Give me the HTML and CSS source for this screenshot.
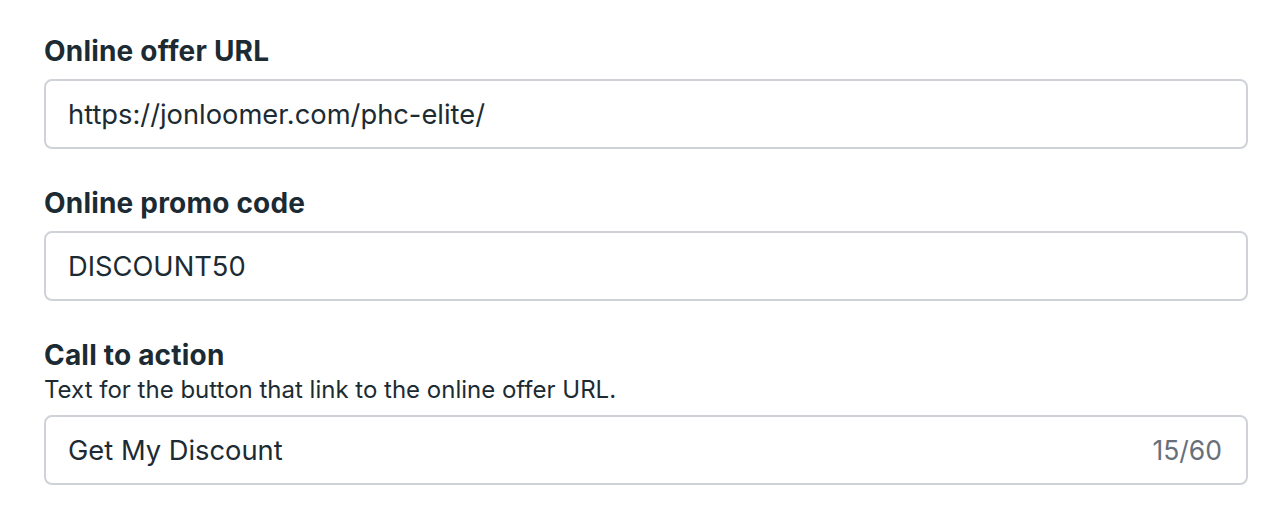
FILE: index.html
```html
<!DOCTYPE html>
<html>
<head>
<meta charset="utf-8">
<link rel="stylesheet" href="styles.css">
</head>
<body>
<div class="form">
  <div class="field">
    <div class="label">Online offer URL</div>
    <div class="input"><span class="value">https://jonloomer.com/phc-elite/</span></div>
  </div>
  <div class="field">
    <div class="label">Online promo code</div>
    <div class="input"><span class="value">DISCOUNT50</span></div>
  </div>
  <div class="field">
    <div class="label">Call to action</div>
    <div class="desc">Text for the button that link to the online offer URL.</div>
    <div class="input"><span class="value">Get My Discount</span><span class="count">15/60</span></div>
  </div>
</div>
</body>
</html>
```
FILE: styles.css
```css
html, body {
  margin: 0;
  padding: 0;
  background: #ffffff;
}
body {
  font-family: Inter, "Liberation Sans", Arial, sans-serif;
  color: #1c2b33;
}
.form {
  padding: 35px 36px 0 44px;
  display: flex;
  flex-direction: column;
  gap: 38px;
}
.field {
  display: flex;
  flex-direction: column;
}
.label {
  font-size: 28px;
  line-height: 32px;
  font-weight: 700;
  letter-spacing: 0.2px;
  margin-bottom: 12px;
}
.desc {
  font-size: 24px;
  line-height: 30px;
  margin-top: -8px;
  margin-bottom: 10px;
}
.input {
  box-sizing: border-box;
  height: 70px;
  border: 2px solid #cfd3d8;
  border-radius: 8px;
  padding: 0 24px 0 22px;
  display: flex;
  align-items: center;
  justify-content: space-between;
  font-size: 27.3px;
}
.count {
  color: #67707a;
  font-size: 26.5px;
}
```
